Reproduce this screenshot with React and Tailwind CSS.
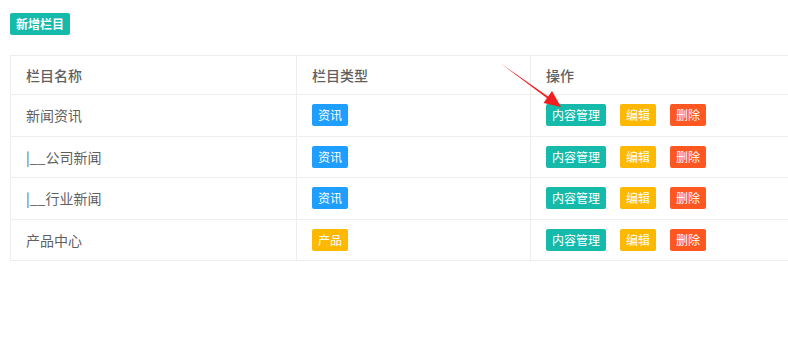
const rows = [
  { name: '新闻资讯', type: '资讯', color: 'bg-[#1e9fff]' },
  { name: '|__公司新闻', type: '资讯', color: 'bg-[#1e9fff]' },
  { name: '|__行业新闻', type: '资讯', color: 'bg-[#1e9fff]' },
  { name: '产品中心', type: '产品', color: 'bg-[#ffb800]' },
];

function Btn({ children, className }) {
  return (
    <span
      className={`flex items-center h-[22px] px-[6px] rounded-[2px] text-[12px] leading-[22px] text-white ${className}`}
    >
      {children}
    </span>
  );
}

const cell = 'border border-[#eeeeee] px-[15px] py-[9px] text-left align-middle';

export default function App() {
  return (
    <div
      className="relative w-[788px] h-[362px] overflow-hidden bg-white"
      style={{ fontFamily: '"Noto Sans CJK SC", sans-serif' }}
    >
      <div className="pl-[10px] pt-[13px]">
        <div className="flex">
          <Btn className="bg-[#16baaa] font-semibold">新增栏目</Btn>
        </div>

        <table className="mt-[20px] w-[1000px] border-collapse text-[14px] leading-[20px] text-[#5f5f5f]">
          <thead>
            <tr>
              <th className={`w-[286px] font-medium ${cell}`}>
                <div className="h-[20px] flex items-center">栏目名称</div>
              </th>
              <th className={`w-[234px] font-medium ${cell}`}>
                <div className="h-[20px] flex items-center">栏目类型</div>
              </th>
              <th className={`font-medium ${cell}`}>
                <div className="h-[20px] flex items-center">操作</div>
              </th>
            </tr>
          </thead>
          <tbody>
            {rows.map((r, i) => (
              <tr key={i}>
                <td className={cell}>
                  <div className="h-[22.5px] flex items-center">{r.name}</div>
                </td>
                <td className={cell}>
                  <div className="h-[22.5px] flex items-center">
                    <Btn className={r.color}>{r.type}</Btn>
                  </div>
                </td>
                <td className={cell}>
                  <div className="h-[22.5px] flex items-center gap-[14px]">
                    <Btn className="bg-[#16baaa]">内容管理</Btn>
                    <Btn className="bg-[#ffb800]">编辑</Btn>
                    <Btn className="bg-[#ff5722]">删除</Btn>
                  </div>
                </td>
              </tr>
            ))}
          </tbody>
        </table>
      </div>

      {/* 标注箭头 */}
      <svg className="absolute left-0 top-0 pointer-events-none" width="788" height="362">
        <polygon points="500,63 550.8,101 548,96.6" fill="#f01e1e" />
        <polygon points="561,107 543.5,103 552,91" fill="#f01e1e" />
      </svg>
    </div>
  );
}
